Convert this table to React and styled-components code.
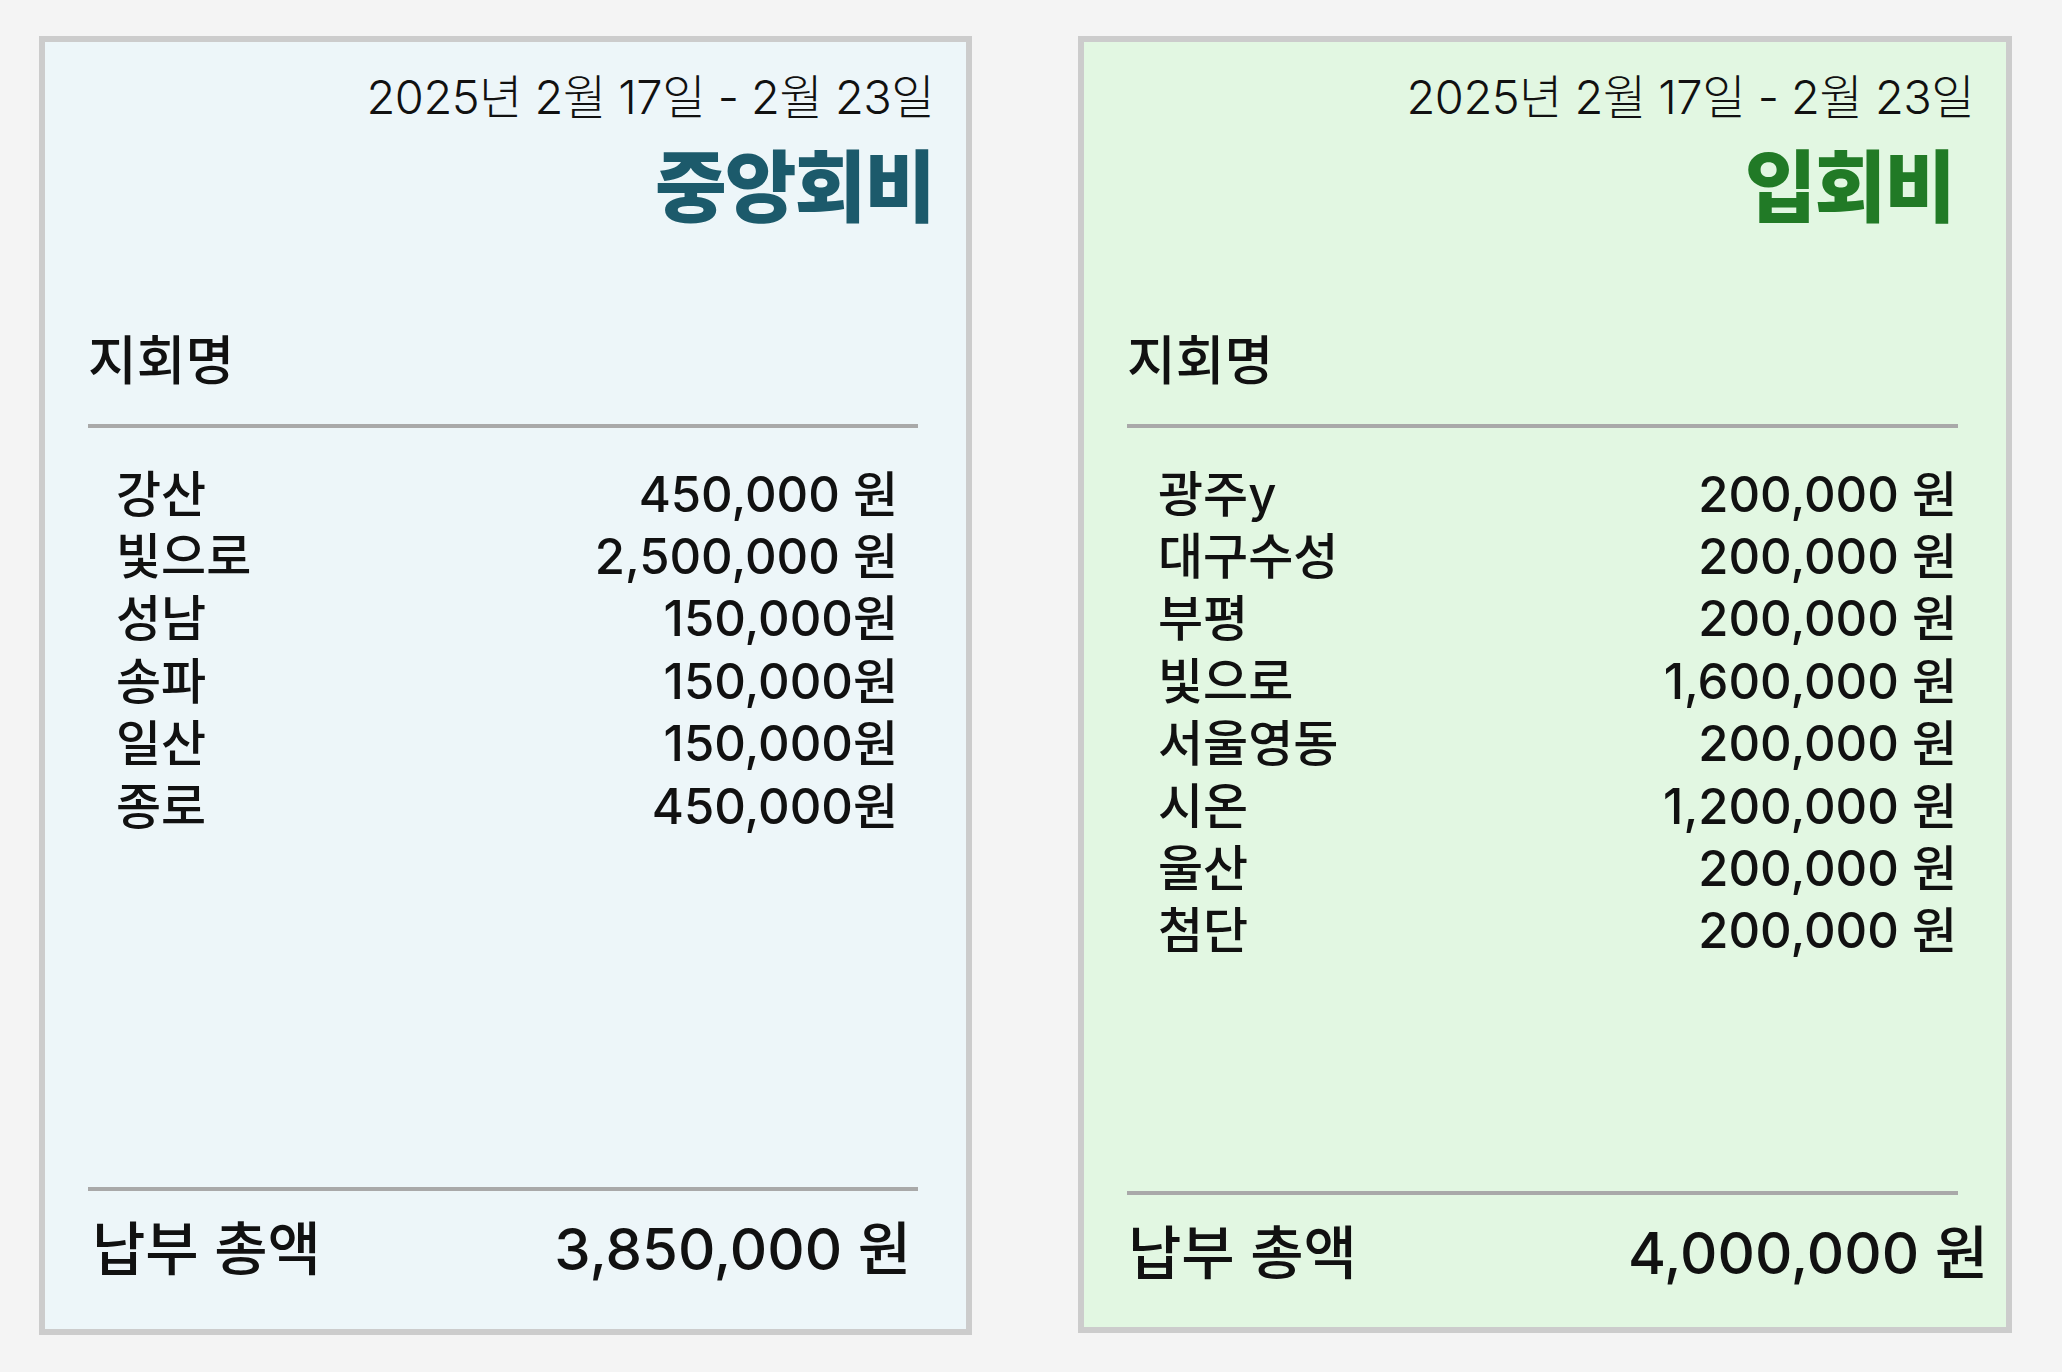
import React from 'react';
import styled, { createGlobalStyle } from 'styled-components';

const GlobalStyle = createGlobalStyle`
  html, body {
    margin: 0;
    padding: 0;
    background: #f4f4f4;
  }
  body {
    font-family: Inter, "Noto Sans CJK KR", "Noto Sans", sans-serif;
    color: #111;
  }
`;

const Page = styled.div`
  display: flex;
  align-items: flex-start;
  gap: 106px;
  padding: 36px 0 0 39px;
  min-height: 1372px;
  box-sizing: border-box;
`;

const Card = styled.section`
  box-sizing: border-box;
  width: ${p => p.$width}px;
  height: ${p => p.$height}px;
  border: 6px solid #cccccc;
  background: ${p => p.$bg};
  display: flex;
  flex-direction: column;
  padding-bottom: ${p => p.$footPad}px;
`;

const Header = styled.header`
  text-align: right;
  padding: 27px 32px 0 0;
`;

const Period = styled.div`
  font-size: 47px;
  font-weight: 300;
  line-height: 56px;
  letter-spacing: -0.5px;
`;

const Title = styled.h1`
  margin: 18px ${p => p.$inset}px 0 0;
  font-size: 78px;
  font-weight: 800;
  line-height: 90px;
  letter-spacing: -2px;
  color: ${p => p.$color};
`;

const Body = styled.div`
  flex: 1;
  display: flex;
  flex-direction: column;
  padding: 0 48px 0 43px;
`;

const Label = styled.div`
  margin-top: 98px;
  font-size: 53px;
  font-weight: 500;
  line-height: 60px;
`;

const Rule = styled.hr`
  margin: ${p => (p.$top ? '33px 0 0' : '0')};
  height: 4px;
  border: 0;
  background: #a9a9a9;
`;

const List = styled.ul`
  flex: 1;
  list-style: none;
  padding: 31px 0 0;
  margin: 0 ${p => p.$right}px 0 ${p => p.$left}px;
`;

const Row = styled.li`
  display: flex;
  justify-content: space-between;
  align-items: center;
  height: 62.4px;
  font-size: 49px;
  font-weight: 500;
`;

const Total = styled.div`
  display: flex;
  justify-content: space-between;
  align-items: center;
  margin: 19px ${p => p.$right}px 0 ${p => p.$left}px;
  height: 70px;
  font-size: 58px;
  font-weight: 500;
`;

const cards = [
  {
    key: 'central',
    title: '중앙회비',
    color: '#1c5a6b',
    bg: '#edf6f9',
    width: 933,
    height: 1299,
    footPad: 49,
    titleInset: 0,
    list: { left: 28, right: 20 },
    total: { left: 4, right: 7 },
    rows: [
      ['강산', '450,000 원'],
      ['빛으로', '2,500,000 원'],
      ['성남', '150,000원'],
      ['송파', '150,000원'],
      ['일산', '150,000원'],
      ['종로', '450,000원'],
    ],
    sum: '3,850,000 원',
  },
  {
    key: 'entry',
    title: '입회비',
    color: '#217a26',
    bg: '#e2f7e2',
    width: 934,
    height: 1297,
    footPad: 43,
    titleInset: 20,
    list: { left: 31, right: 1 },
    total: { left: 1, right: -30 },
    rows: [
      ['광주y', '200,000 원'],
      ['대구수성', '200,000 원'],
      ['부평', '200,000 원'],
      ['빛으로', '1,600,000 원'],
      ['서울영동', '200,000 원'],
      ['시온', '1,200,000 원'],
      ['울산', '200,000 원'],
      ['첨단', '200,000 원'],
    ],
    sum: '4,000,000 원',
  },
];

function FeeCard({ card }) {
  return (
    <Card $bg={card.bg} $width={card.width} $height={card.height} $footPad={card.footPad}>
      <Header>
        <Period>2025년 2월 17일 - 2월 23일</Period>
        <Title $color={card.color} $inset={card.titleInset}>{card.title}</Title>
      </Header>
      <Body>
        <Label>지회명</Label>
        <Rule $top />
        <List $left={card.list.left} $right={card.list.right}>
          {card.rows.map(([name, amount]) => (
            <Row key={name}>
              <span>{name}</span>
              <span>{amount}</span>
            </Row>
          ))}
        </List>
        <Rule />
        <Total $left={card.total.left} $right={card.total.right}>
          <span>납부 총액</span>
          <span>{card.sum}</span>
        </Total>
      </Body>
    </Card>
  );
}

export default function App() {
  return (
    <>
      <GlobalStyle />
      <Page>
        {cards.map(card => (
          <FeeCard key={card.key} card={card} />
        ))}
      </Page>
    </>
  );
}
